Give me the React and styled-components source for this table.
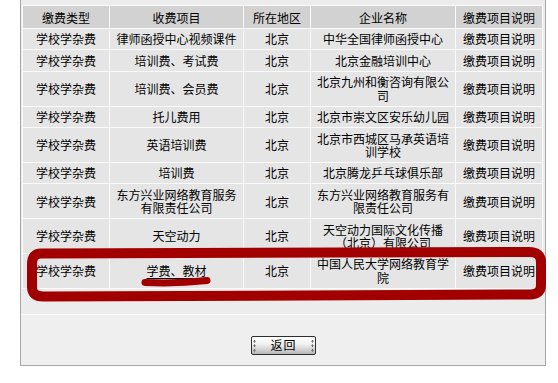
import React from 'react'
import styled, { createGlobalStyle } from 'styled-components'

const GlobalStyle = createGlobalStyle`
  body {
    margin: 0;
    background: #fff;
    font-family: "Noto Sans CJK SC", "Liberation Sans", sans-serif;
  }
`

const Page = styled.div`
  position: relative;
  width: 558px;
  height: 383px;
  overflow: hidden;
`

// grey frame that holds the fee list and the back button
const Panel = styled.div`
  margin-left: 20px;
  width: 524px;
  background: #efefef;
  border: 1px solid #a6a6a6;
  border-top: none;
`

const ListArea = styled.div`
  padding: 5px 0 25px 1px;
  background: #ececec;
  border-bottom: 1px solid #fbfbfb;
`

const FeeTable = styled.table`
  table-layout: fixed;
  width: 521px;
  border-spacing: 1px;
  background: #fafafa;
  font-size: 12px;
  line-height: 13.3px;
  color: #000;
`

const Col = styled.col`
  width: ${p => p.$w}px;
`

const HeadCell = styled.th`
  padding: 4.5px 2px 4px;
  font-weight: normal;
  text-align: center;
  background: #d2d2d2;
`

const Cell = styled.td`
  padding: 3.6px 2px;
  text-align: center;
  vertical-align: middle;
  background: #e5e5e5;
`

const ItemLink = styled.span`
  text-decoration: underline;
  text-underline-offset: 2px;
`

const ButtonBar = styled.div`
  display: flex;
  justify-content: center;
  padding: 21px 0 10px 1px;
`

const BackButton = styled.button`
  position: relative;
  width: 65px;
  height: 19px;
  padding: 0;
  border: 1px solid #2e2e2e;
  border-radius: 2px;
  background: linear-gradient(#ffffff, #f1f1f1 40%, #d2d2d2 75%, #b4b4b4);
  font: 12px/16px "Noto Sans CJK SC", "Liberation Sans", sans-serif;
  color: #000;
  letter-spacing: 1px;

  &::before,
  &::after {
    content: '';
    position: absolute;
    top: 2px;
    width: 3px;
    height: 14px;
    background: radial-gradient(circle, #6a6a6a 0.9px, transparent 1.3px) 0 0 / 3px 4.5px repeat-y;
  }
  &::before { left: 1px; }
  &::after { right: 1px; }
`

const Marker = styled.svg`
  position: absolute;
  left: 0;
  top: 0;
  pointer-events: none;
`

const headers = ['缴费类型', '收费项目', '所在地区', '企业名称', '缴费项目说明']

const rows = [
  ['律师函授中心视频课件', '中华全国律师函授中心'],
  ['培训费、考试费', '北京金融培训中心'],
  ['培训费、会员费', '北京九州和衡咨询有限公司'],
  ['托儿费用', '北京市崇文区安乐幼儿园'],
  ['英语培训费', '北京市西城区马承英语培训学校'],
  ['培训费', '北京腾龙乒乓球俱乐部'],
  ['东方兴业网络教育服务有限责任公司', '东方兴业网络教育服务有限责任公司'],
  ['天空动力', '天空动力国际文化传播（北京）有限公司'],
  ['学费、教材', '中国人民大学网络教育学院', true],
]

export default function App() {
  return (
    <Page>
      <GlobalStyle />
      <Panel>
        <ListArea>
          <FeeTable>
            <colgroup>
              <Col $w={86} />
              <Col $w={133} />
              <Col $w={66} />
              <Col $w={144} />
              <Col $w={86} />
            </colgroup>
            <thead>
              <tr>
                {headers.map(h => <HeadCell key={h}>{h}</HeadCell>)}
              </tr>
            </thead>
            <tbody>
              {rows.map(([item, company, linked], i) => (
                <tr key={i}>
                  <Cell>学校学杂费</Cell>
                  <Cell>{linked ? <ItemLink>{item}</ItemLink> : item}</Cell>
                  <Cell>北京</Cell>
                  <Cell>{company}</Cell>
                  <Cell>缴费项目说明</Cell>
                </tr>
              ))}
            </tbody>
          </FeeTable>
        </ListArea>
        <ButtonBar>
          <BackButton>返回</BackButton>
        </ButtonBar>
      </Panel>

      {/* red pen marks around the last row */}
      <Marker width="558" height="383" viewBox="0 0 558 383">
        <path
          d="M41 253.5 L529 252 Q541 252 541 262 L541 285 Q541 294 531 294.5 L43 296.5 Q32 296.5 32 287 L32 264 Q32 253.5 41 253.5 Z"
          fill="none"
          stroke="#a20000"
          strokeWidth="10"
          strokeLinejoin="round"
        />
        <path
          d="M145 282.5 Q176 284 207 280.5"
          fill="none"
          stroke="#a20000"
          strokeWidth="7"
          strokeLinecap="round"
        />
      </Marker>
    </Page>
  )
}
